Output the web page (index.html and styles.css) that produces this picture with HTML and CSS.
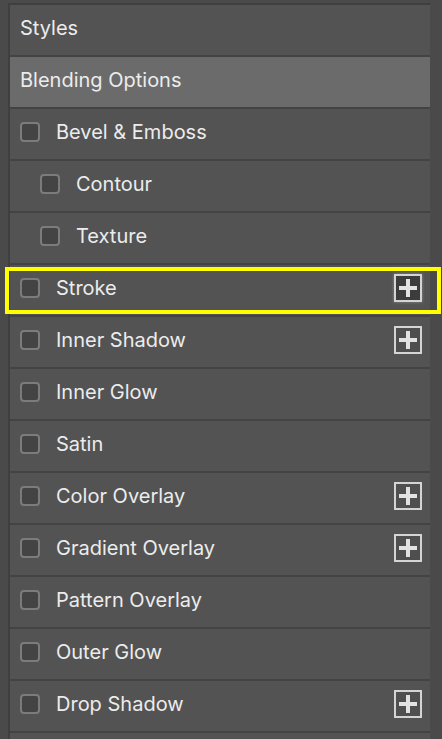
FILE: index.html
```html
<!DOCTYPE html>
<html lang="en">
<head>
  <meta charset="UTF-8">
  <meta name="viewport" content="width=device-width, initial-scale=1.0">
  <title>Layer Style</title>
  <link rel="stylesheet" href="styles.css">
</head>
<body>
  <div class="panel">
    <div class="row">Styles</div>
    <div class="row selected">Blending Options</div>
    <div class="row"><span class="check"></span>Bevel &amp; Emboss</div>
    <div class="row sub"><span class="check"></span>Contour</div>
    <div class="row sub"><span class="check"></span>Texture</div>
    <div class="row highlight">
      <span class="check"></span>Stroke
      <span class="add hover"></span>
    </div>
    <div class="row"><span class="check"></span>Inner Shadow<span class="add"></span></div>
    <div class="row"><span class="check"></span>Inner Glow</div>
    <div class="row"><span class="check"></span>Satin</div>
    <div class="row"><span class="check"></span>Color Overlay<span class="add"></span></div>
    <div class="row"><span class="check"></span>Gradient Overlay<span class="add"></span></div>
    <div class="row"><span class="check"></span>Pattern Overlay</div>
    <div class="row"><span class="check"></span>Outer Glow</div>
    <div class="row"><span class="check"></span>Drop Shadow<span class="add"></span></div>
    <div class="row"></div>
  </div>
</body>
</html>
```

FILE: styles.css
```css
body {
  font-family: Inter, "Noto Sans", Arial, sans-serif;
  margin: 0;
  padding: 0;
  background-color: #4a4a4a;
  height: 739px;
  overflow: hidden;
}

.panel {
  margin: 3px 12px 0 8px;
  border-top: 2px solid #3f3f3f;
  border-left: 2px solid #3f3f3f;
  background-color: #535353;
}

.row {
  position: relative;
  display: flex;
  align-items: center;
  height: 46px;
  padding: 0 10px 4px;
  border-bottom: 2px solid #434343;
  color: #ececec;
  font-size: 20px;
  box-sizing: content-box;
}

.row.selected {
  background-color: #6b6b6b;
}

.row.sub {
  padding-left: 30px;
}

.check {
  width: 16px;
  height: 16px;
  border: 2px solid #7c7c7c;
  border-radius: 4px;
  background-color: #444444;
  margin-right: 16px;
  flex-shrink: 0;
}

.add {
  position: relative;
  margin-left: auto;
  margin-right: -2px;
  width: 24px;
  height: 24px;
  border: 2px solid #d4d4d4;
  background-color: #4f4f4f;
}

.add::before,
.add::after {
  content: "";
  position: absolute;
  background-color: #e2e2e2;
  left: 50%;
  top: 50%;
  transform: translate(-50%, -50%);
}

.add::before {
  width: 18px;
  height: 4px;
}

.add::after {
  width: 4px;
  height: 18px;
}

.add.hover {
  background-color: #3c3c3c;
  box-shadow: 0 0 3px rgba(255, 255, 255, 0.35);
}

.highlight::after {
  content: "";
  position: absolute;
  left: -5px;
  right: -11px;
  top: 2px;
  bottom: 1px;
  border: 4px solid #ffff00;
}
```
